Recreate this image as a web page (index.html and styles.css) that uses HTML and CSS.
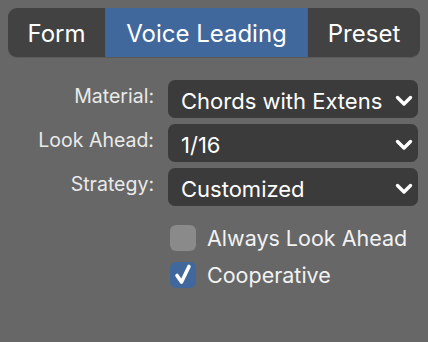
FILE: index.html
```html
<!DOCTYPE html>
<html lang="en">
  <head>
    <meta charset="UTF-8" />
    <meta name="viewport" content="width=device-width, initial-scale=1.0" />
    <title>Voice Leading</title>
    <link rel="stylesheet" href="styles.css">
  </head>
  <body>
    <div class="tabs">
      <div class="tab tab-form">Form</div>
      <div class="tab tab-active">Voice Leading</div>
      <div class="tab tab-preset">Preset</div>
    </div>

    <div class="fields">
      <div class="row">
        <label class="label">Material:</label>
        <div class="select">
          <span class="value">Chords with Extens</span>
          <svg class="chevron" viewBox="0 0 18 12" width="18" height="12">
            <path d="M2.5 2.5 L9 9 L15.5 2.5" fill="none" stroke="#fff" stroke-width="3.4" stroke-linecap="round" stroke-linejoin="round" />
          </svg>
        </div>
      </div>
      <div class="row">
        <label class="label">Look Ahead:</label>
        <div class="select">
          <span class="value">1/16</span>
          <svg class="chevron" viewBox="0 0 18 12" width="18" height="12">
            <path d="M2.5 2.5 L9 9 L15.5 2.5" fill="none" stroke="#fff" stroke-width="3.4" stroke-linecap="round" stroke-linejoin="round" />
          </svg>
        </div>
      </div>
      <div class="row">
        <label class="label">Strategy:</label>
        <div class="select">
          <span class="value">Customized</span>
          <svg class="chevron" viewBox="0 0 18 12" width="18" height="12">
            <path d="M2.5 2.5 L9 9 L15.5 2.5" fill="none" stroke="#fff" stroke-width="3.4" stroke-linecap="round" stroke-linejoin="round" />
          </svg>
        </div>
      </div>
    </div>

    <div class="checks">
      <div class="check">
        <span class="box"></span>
        <span class="check-label">Always Look Ahead</span>
      </div>
      <div class="check">
        <span class="box box-on">
          <svg viewBox="0 0 26 26" width="26" height="26">
            <path d="M7 13.5 L11.5 20 L19 4.5" fill="none" stroke="#fff" stroke-width="3.6" stroke-linecap="round" stroke-linejoin="round" />
          </svg>
        </span>
        <span class="check-label">Cooperative</span>
      </div>
    </div>
  </body>
</html>
```

FILE: styles.css
```css
body {
  margin: 0;
  background-color: #676767;
  font-family: Inter, "Noto Sans", sans-serif;
  color: #f2f2f2;
  width: 428px;
  height: 342px;
  overflow: hidden;
}

.tabs {
  display: flex;
  margin: 8px 8px 0 8px;
  height: 49px;
  border-radius: 9px;
  overflow: hidden;
  background-color: #424242;
  box-shadow: 0 1px 0 #5a5a5a;
}

.tab {
  display: flex;
  align-items: center;
  justify-content: center;
  font-size: 24px;
  color: #ffffff;
  padding-top: 2px;
  box-sizing: border-box;
}

.tab-form {
  width: 98px;
  border-right: 1px solid #5e5e5e;
}

.tab-active {
  width: 202px;
  background-color: #41689c;
  border-right: 1px solid #5e5e5e;
}

.tab-preset {
  flex: 1;
}

.fields {
  display: flex;
  flex-direction: column;
  gap: 6px;
  margin-top: 23px;
}

.row {
  display: flex;
  align-items: flex-start;
}

.label {
  flex: 0 0 168px;
  text-align: right;
  font-size: 19.5px;
  color: #eaeaea;
  padding: 4px 14px 0 0;
  box-sizing: border-box;
}

.select {
  width: 250px;
  height: 38px;
  background-color: #3b3b3b;
  border-radius: 7px;
  display: flex;
  align-items: center;
  padding: 3px 5px 0 13px;
  box-sizing: border-box;
}

.value {
  flex: 1;
  font-size: 22px;
  color: #ffffff;
  white-space: nowrap;
}

.checks {
  display: flex;
  flex-direction: column;
  gap: 11px;
  margin: 19px 0 0 170px;
}

.check {
  display: flex;
  align-items: center;
  gap: 11px;
}

.box {
  width: 26px;
  height: 26px;
  border-radius: 6px;
  background-color: #8a8a8a;
  display: block;
}

.box-on {
  background-color: #41689c;
}

.box svg {
  display: block;
}

.check-label {
  font-size: 21.5px;
  color: #f2f2f2;
}
```
